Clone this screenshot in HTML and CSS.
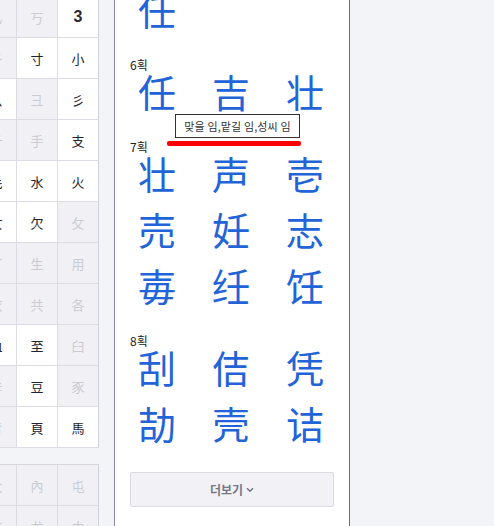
FILE: index.html
```html
<!DOCTYPE html>
<html lang="ko">
<head>
    <meta charset="UTF-8">
    <meta name="viewport" content="width=device-width, initial-scale=1.0">
    <title>한자 부수 찾기</title>
    <link rel="stylesheet" href="styles.css">
</head>
<body>

<div class="page">
    <div class="radicals">
        <div class="radical-grid">
            <div class="cell off">乙</div><div class="cell off">丂</div><div class="cell num">3</div>
            <div class="cell off">千</div><div class="cell">寸</div><div class="cell">小</div>
            <div class="cell">么</div><div class="cell off">彐</div><div class="cell">彡</div>
            <div class="cell off">斤</div><div class="cell off">手</div><div class="cell">支</div>
            <div class="cell">毛</div><div class="cell">水</div><div class="cell">火</div>
            <div class="cell">女</div><div class="cell">欠</div><div class="cell off">攵</div>
            <div class="cell off">丁</div><div class="cell off">生</div><div class="cell off">用</div>
            <div class="cell off">衣</div><div class="cell off">共</div><div class="cell off">各</div>
            <div class="cell">血</div><div class="cell">至</div><div class="cell off">臼</div>
            <div class="cell off">辛</div><div class="cell">豆</div><div class="cell off">豕</div>
            <div class="cell off">青</div><div class="cell">頁</div><div class="cell">馬</div>
        </div>
        <div class="radical-grid">
            <div class="cell off">太</div><div class="cell off">內</div><div class="cell off">屯</div>
            <div class="cell off">乍</div><div class="cell off">龙</div><div class="cell off">由</div>
        </div>
    </div>

    <div class="panel">
        <div class="stroke-group">
            <div class="hanja-list"><span>任</span></div>
        </div>
        <div class="stroke-group">
            <div class="stroke-label">6획</div>
            <div class="hanja-list"><span>任</span><span>吉</span><span>壮</span></div>
        </div>
        <div class="stroke-group">
            <div class="stroke-label">7획</div>
            <div class="hanja-list">
                <span>壮</span><span>声</span><span>壱</span>
                <span>売</span><span>妊</span><span>志</span>
                <span>毐</span><span>纴</span><span>饪</span>
            </div>
        </div>
        <div class="stroke-group">
            <div class="stroke-label">8획</div>
            <div class="hanja-list">
                <span>刮</span><span>佶</span><span>凭</span>
                <span>劼</span><span>壳</span><span>诘</span>
            </div>
        </div>
        <button class="more-btn">더보기
            <svg width="8" height="6" viewBox="0 0 8 6"><path d="M1 1.2 L4 4.2 L7 1.2" fill="none" stroke="#777785" stroke-width="1.6"/></svg>
        </button>

        <!-- 마우스 올린 글자 뜻 -->
        <div class="tooltip">맞을 임,맡길 임,성씨 임</div>
        <div class="tooltip-line"></div>
    </div>
</div>

</body>
</html>
```

FILE: styles.css
```css
body {
    margin: 0;
    padding: 0;
    height: 526px;
    overflow: hidden;
    background-color: #f3f4f7;
    font-family: "Noto Sans CJK KR", "Noto Sans", sans-serif;
}
.page {
    display: flex;
    align-items: flex-start;
}
.radicals {
    margin-left: -25px;
    margin-top: -4px;
}
.radical-grid {
    display: grid;
    grid-template-columns: repeat(3, 41px);
    border-left: 1px solid #d6d6df;
    border-top: 1px solid #d6d6df;
    background-color: #ffffff;
}
.radical-grid + .radical-grid {
    margin-top: 16px;
}
.cell {
    height: 40px;
    border-right: 1px solid #dcdce4;
    border-bottom: 1px solid #dcdce4;
    display: flex;
    align-items: center;
    justify-content: center;
    font-size: 13px;
    color: #24242e;
}
.cell:nth-child(3n) {
    border-right-color: #cfd0da;
}
.cell.off {
    background-color: #f1f1f5;
    color: #cbcbd3;
}
.cell.num {
    font-family: "Liberation Sans", Arial, sans-serif;
    font-size: 16px;
    font-weight: bold;
    color: #2a2a34;
}
.panel {
    position: relative;
    box-sizing: border-box;
    width: 236px;
    height: 560px;
    margin-left: 15px;
    margin-top: -11px;
    padding: 0 15px;
    background-color: #ffffff;
    border: 1px solid #8a8a98;
    border-right-color: #6c6c78;
}
.stroke-group + .stroke-group {
    margin-top: 30px;
}
.stroke-label {
    font-size: 12px;
    line-height: 14px;
    color: #222222;
}
.hanja-list {
    display: grid;
    grid-template-columns: repeat(3, 74px);
    row-gap: 18px;
    margin-left: -10px;
}
.hanja-list span {
    font-size: 38px;
    line-height: 38px;
    text-align: center;
    color: #2264d8;
    cursor: pointer;
}
.more-btn {
    display: flex;
    align-items: center;
    justify-content: center;
    gap: 3px;
    box-sizing: border-box;
    width: 100%;
    height: 35px;
    margin-top: 30px;
    background-color: #f2f2f6;
    border: 1px solid #dadae2;
    border-radius: 2px;
    font-family: inherit;
    font-size: 12px;
    font-weight: bold;
    color: #777785;
    cursor: pointer;
}
.tooltip {
    position: absolute;
    left: 60px;
    top: 124px;
    box-sizing: border-box;
    width: 125px;
    height: 24px;
    border: 1px solid #333333;
    background-color: #ffffff;
    font-size: 11px;
    line-height: 22px;
    text-align: center;
    color: #333333;
    white-space: nowrap;
}
.tooltip-line {
    position: absolute;
    left: 52px;
    top: 151px;
    width: 134px;
    height: 5px;
    border-radius: 2px;
    background-color: #ff0000;
}
```
